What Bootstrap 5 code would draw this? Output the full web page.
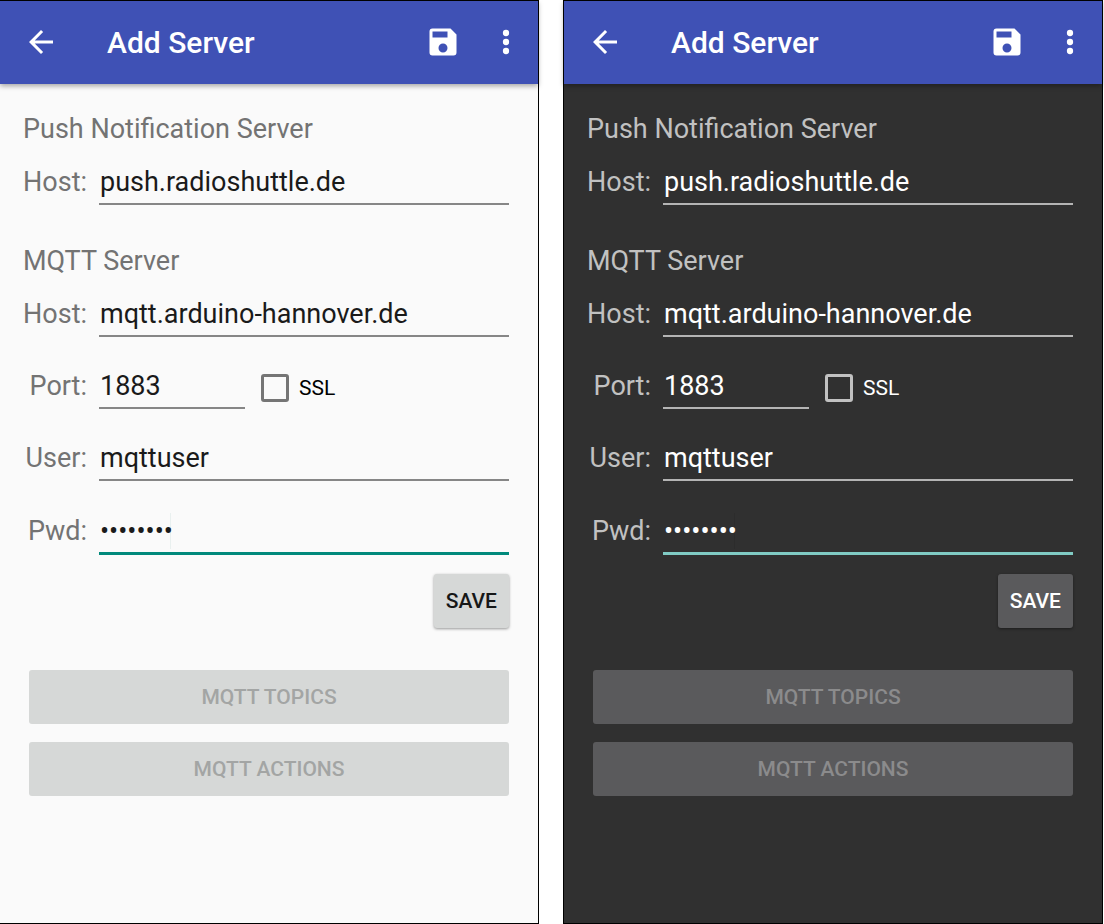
<!DOCTYPE html>
<html lang="en">
<head>
<meta charset="utf-8">
<meta name="viewport" content="width=device-width, initial-scale=1">
<title>Add Server</title>
<link href="https://cdn.jsdelivr.net/npm/bootstrap@5.3.0/dist/css/bootstrap.min.css" rel="stylesheet">
<style>
  body { font-family: Roboto, sans-serif; font-size: 27px; line-height: 40px; background: #fff; }
  .screens { gap: 24px; padding-right: 1px; }
  .screen {
    --surface: #fafafa; --label: #737373; --ink: #1a1a1a; --rule: #868686; --accent: #00897b;
    --btn: #d6d8d7; --btn-ink: #161717; --btn-off: #a3a5a4; --box: #757575; --ssl: #000; --caret: #e9f0ef;
    flex: 1 1 0; min-width: 0; background: var(--surface); border: 1px solid #000;
  }
  .screen:first-child { border-left: 0; }
  .screen.night {
    --surface: #303030; --label: #c1c1c1; --ink: #fff; --rule: #b4b4b4; --accent: #80cbc4;
    --btn: #5a5a5c; --btn-ink: #fff; --btn-off: #8b8b8c; --box: #c1c1c1; --ssl: #fff; --caret: #2c2c2c;
  }
  .appbar { height: 83px; background: #3f51b5; color: #fff; padding: 0 20px 0 23px; box-shadow: 0 2px 5px rgba(0,0,0,.35); }
  .appbar h1 { font-size: 30px; font-weight: 500; line-height: 40px; margin-left: 48px; }
  .icon-btn { padding: 0 0 2px; border: 0; background: none; color: #fff; line-height: 0; }
  .icon-btn svg { fill: currentColor; display: block; }
  .overflow-btn { margin-left: 33px; }
  .form-area { padding: 25px 29px 24px 23px; }
  .form-area h2 { font-size: 27px; font-weight: 400; line-height: 40px; color: var(--label); }
  .section-gap { margin-top: 36px; }
  .fields { gap: 16px; }
  .field { gap: 12px; min-height: 56px; }
  .field-label { width: 64px; padding-top: 10px; line-height: 40px; text-align: right; color: var(--label); white-space: nowrap; flex: none; }
  .line-input {
    height: 56px; padding: 12px 0 0 1px; border: 0; border-bottom: 2px solid var(--rule); border-radius: 0;
    background: transparent; color: var(--ink); font-size: 27px; line-height: 40px; outline: 0;
    min-width: 0; flex: 1 1 0;
  }
  .port { flex: 0 0 146px; }
  .active-input {
    height: 58px; border-bottom: 3px solid var(--accent);
    background: linear-gradient(var(--caret), var(--caret)) 71px 16px / 1px 36px no-repeat;
  }
  .ssl-group { padding-top: 14px; }
  .ssl-box {
    appearance: none; width: 28px; height: 28px; margin: 0 10px 0 4px; border: 3px solid var(--box);
    border-radius: 3px; background: transparent; flex: none;
  }
  .ssl-label { font-size: 21px; line-height: 40px; color: var(--ssl); }
  .raised {
    height: 54px; padding: 1px 12px 0; border: 0; border-radius: 3px; background: var(--btn); color: var(--btn-ink);
    font-size: 21px; font-weight: 500; line-height: 53px;
  }
  .save { margin-top: 19px; box-shadow: 0 1px 3px rgba(0,0,0,.4); }
  .more { margin: 42px 0 0 6px; gap: 18px; }
  .raised:disabled { color: var(--btn-off); }
</style>
</head>
<body>
<main class="screens d-flex min-vh-100">
  <section class="screen">
    <header class="appbar d-flex align-items-center">
      <button class="icon-btn" type="button" aria-label="Back"><svg width="36" height="36" viewBox="0 0 24 24"><path d="M20 11H7.83l5.59-5.59L12 4l-8 8 8 8 1.41-1.41L7.83 13H20v-2z"/></svg></button>
      <h1 class="mb-0">Add Server</h1>
      <button class="icon-btn ms-auto" type="button" aria-label="Save"><svg width="36" height="36" viewBox="0 0 24 24"><path fill-rule="evenodd" d="M17 3H5a2 2 0 0 0-2 2v14a2 2 0 0 0 2 2h14a2 2 0 0 0 2-2V7l-4-4zM12 19a3 3 0 1 1 0-6 3 3 0 0 1 0 6zM15 9H5V5h10v4z"/></svg></button>
      <button class="icon-btn overflow-btn" type="button" aria-label="More options"><svg width="24" height="36" viewBox="4 0 16 24"><circle cx="12" cy="6" r="2.1"/><circle cx="12" cy="12" r="2.1"/><circle cx="12" cy="18" r="2.1"/></svg></button>
    </header>
    <form class="form-area">
      <h2 class="mb-0">Push Notification Server</h2>
      <div class="field d-flex align-items-center">
        <label class="field-label" for="push-a">Host:</label><input class="line-input" id="push-a" type="text" value="push.radioshuttle.de">
      </div>
      <h2 class="mb-0 section-gap">MQTT Server</h2>
      <div class="fields d-flex flex-column">
        <div class="field d-flex align-items-center">
          <label class="field-label" for="host-a">Host:</label><input class="line-input" id="host-a" type="text" value="mqtt.arduino-hannover.de">
        </div>
        <div class="field d-flex align-items-center">
          <label class="field-label" for="port-a">Port:</label><input class="line-input port" id="port-a" type="text" value="1883">
          <div class="ssl-group d-flex align-items-center"><input class="ssl-box" id="ssl-a" type="checkbox"><label class="ssl-label" for="ssl-a">SSL</label></div>
        </div>
        <div class="field d-flex align-items-center">
          <label class="field-label" for="user-a">User:</label><input class="line-input" id="user-a" type="text" value="mqttuser">
        </div>
        <div class="field d-flex align-items-center">
          <label class="field-label" for="pwd-a">Pwd:</label><input class="line-input active-input" id="pwd-a" type="password" value="password">
        </div>
      </div>
      <div class="d-flex justify-content-end"><button class="raised save" type="button">SAVE</button></div>
      <div class="more d-flex flex-column">
        <button class="raised" type="button" disabled>MQTT TOPICS</button>
        <button class="raised" type="button" disabled>MQTT ACTIONS</button>
      </div>
    </form>
  </section>

  <section class="screen night">
    <header class="appbar d-flex align-items-center">
      <button class="icon-btn" type="button" aria-label="Back"><svg width="36" height="36" viewBox="0 0 24 24"><path d="M20 11H7.83l5.59-5.59L12 4l-8 8 8 8 1.41-1.41L7.83 13H20v-2z"/></svg></button>
      <h1 class="mb-0">Add Server</h1>
      <button class="icon-btn ms-auto" type="button" aria-label="Save"><svg width="36" height="36" viewBox="0 0 24 24"><path fill-rule="evenodd" d="M17 3H5a2 2 0 0 0-2 2v14a2 2 0 0 0 2 2h14a2 2 0 0 0 2-2V7l-4-4zM12 19a3 3 0 1 1 0-6 3 3 0 0 1 0 6zM15 9H5V5h10v4z"/></svg></button>
      <button class="icon-btn overflow-btn" type="button" aria-label="More options"><svg width="24" height="36" viewBox="4 0 16 24"><circle cx="12" cy="6" r="2.1"/><circle cx="12" cy="12" r="2.1"/><circle cx="12" cy="18" r="2.1"/></svg></button>
    </header>
    <form class="form-area">
      <h2 class="mb-0">Push Notification Server</h2>
      <div class="field d-flex align-items-center">
        <label class="field-label" for="push-b">Host:</label><input class="line-input" id="push-b" type="text" value="push.radioshuttle.de">
      </div>
      <h2 class="mb-0 section-gap">MQTT Server</h2>
      <div class="fields d-flex flex-column">
        <div class="field d-flex align-items-center">
          <label class="field-label" for="host-b">Host:</label><input class="line-input" id="host-b" type="text" value="mqtt.arduino-hannover.de">
        </div>
        <div class="field d-flex align-items-center">
          <label class="field-label" for="port-b">Port:</label><input class="line-input port" id="port-b" type="text" value="1883">
          <div class="ssl-group d-flex align-items-center"><input class="ssl-box" id="ssl-b" type="checkbox"><label class="ssl-label" for="ssl-b">SSL</label></div>
        </div>
        <div class="field d-flex align-items-center">
          <label class="field-label" for="user-b">User:</label><input class="line-input" id="user-b" type="text" value="mqttuser">
        </div>
        <div class="field d-flex align-items-center">
          <label class="field-label" for="pwd-b">Pwd:</label><input class="line-input active-input" id="pwd-b" type="password" value="password">
        </div>
      </div>
      <div class="d-flex justify-content-end"><button class="raised save" type="button">SAVE</button></div>
      <div class="more d-flex flex-column">
        <button class="raised" type="button" disabled>MQTT TOPICS</button>
        <button class="raised" type="button" disabled>MQTT ACTIONS</button>
      </div>
    </form>
  </section>
</main>
<script src="https://cdn.jsdelivr.net/npm/bootstrap@5.3.0/dist/js/bootstrap.bundle.min.js"></script>
</body>
</html>
